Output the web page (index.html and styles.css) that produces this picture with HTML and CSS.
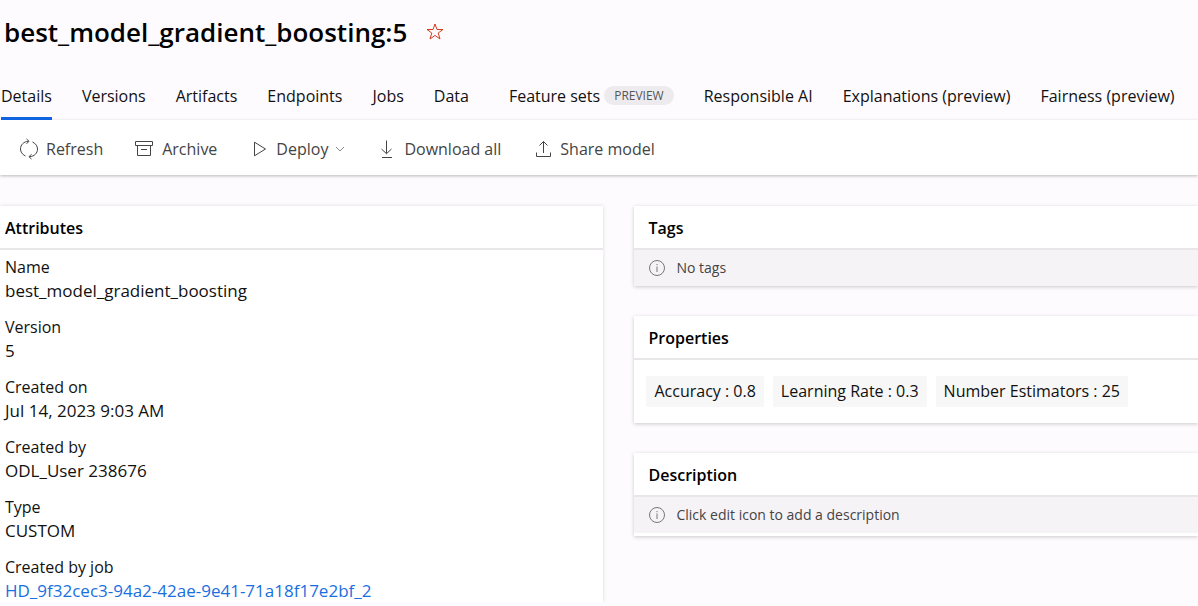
FILE: index.html
```html
<!DOCTYPE html>
<html lang="en">
<head>
<meta charset="utf-8">
<meta name="viewport" content="width=device-width, initial-scale=1">
<title>best_model_gradient_boosting:5</title>
<link rel="stylesheet" href="styles.css">
</head>
<body>
<header class="page-header">
  <h1 class="page-title">best_model_gradient_boosting:5</h1>
  <button class="favorite" type="button" aria-label="Add to favorites">
    <svg width="18" height="18" viewBox="0 0 18 18"><path d="M9 1 11 6.500H17L12.200 10 14 16 9 12.400 4 16 5.800 10 1 6.500H7Z"/></svg>
  </button>
</header>
<nav class="tabs" aria-label="Model sections">
  <a class="tab tab-active" href="#details" aria-current="page">Details</a>
  <a class="tab" href="#versions">Versions</a>
  <a class="tab" href="#artifacts">Artifacts</a>
  <a class="tab" href="#endpoints">Endpoints</a>
  <a class="tab" href="#jobs">Jobs</a>
  <a class="tab" href="#data">Data</a>
  <a class="tab tab-feature" href="#features">Feature sets <span class="badge">PREVIEW</span></a>
  <a class="tab" href="#responsible">Responsible AI</a>
  <a class="tab" href="#explanations">Explanations (preview)</a>
  <a class="tab" href="#fairness">Fairness (preview)</a>
</nav>
<div class="toolbar" role="toolbar" aria-label="Model actions">
  <button class="action" type="button">
    <svg class="icon" width="20" height="22" viewBox="0 0 20 22"><path d="M6.500 18C3 16.500 1.500 13.500 1.500 11 1.500 7 4.500 3.500 9.500 3.300M7.500 1 10 3.300 7.500 5.800M13.500 4C17 5.500 18.500 8.500 18.500 11 18.500 15 15.500 18.500 10.500 18.700M12.500 16.200 10 18.700 12.500 21"/></svg>
    Refresh
  </button>
  <button class="action" type="button">
    <svg class="icon" width="20" height="18" viewBox="0 0 20 18"><path d="M.5 1.500H17.500V5.500H.5ZM2.500 5.500V15.500H15.500V5.500M6 9.500H12"/></svg>
    Archive
  </button>
  <button class="action" type="button" aria-haspopup="true">
    <svg class="icon" width="20" height="18" viewBox="-4 0 20 18"><path d="M1.500 2.200V15.800L12.500 9Z"/></svg>
    Deploy
    <svg class="chevron" width="10" height="8" viewBox="0 0 10 8"><path d="M1 2 5 6 9 2"/></svg>
  </button>
  <button class="action" type="button">
    <svg class="icon" width="20" height="20" viewBox="-3 0 20 20"><path d="M6.500 1.500V14.500M1.500 10 6.500 14.700 11.500 10M2 18.500H12"/></svg>
    Download all
  </button>
  <button class="action" type="button">
    <svg class="icon" width="20" height="20" viewBox="-3 0 20 20"><path d="M7.500 14V2.500M3.500 6.500 7.500 2.500 11.500 6.500M.5 13.500V17.500H14.500V13.500"/></svg>
    Share model
  </button>
</div>
<main class="content">
  <section class="card attributes">
    <h2 class="card-title">Attributes</h2>
    <dl class="fields">
      <div><dt>Name</dt><dd>best_model_gradient_boosting</dd></div>
      <div><dt>Version</dt><dd>5</dd></div>
      <div><dt>Created on</dt><dd>Jul 14, 2023 9:03 AM</dd></div>
      <div><dt>Created by</dt><dd>ODL_User 238676</dd></div>
      <div><dt>Type</dt><dd>CUSTOM</dd></div>
      <div><dt>Created by job</dt><dd><a class="link" href="#job">HD_9f32cec3-94a2-42ae-9e41-71a18f17e2bf_2</a></dd></div>
    </dl>
  </section>
  <div class="side">
    <section class="card">
      <h2 class="card-title">Tags</h2>
      <p class="notice">
        <svg class="info" width="18" height="18" viewBox="0 0 18 18"><circle cx="9" cy="9" r="7.500"/><path d="M9 7.500V13M9 5V6.200"/></svg>
        No tags
      </p>
    </section>
    <section class="card">
      <h2 class="card-title">Properties</h2>
      <ul class="chips">
        <li>Accuracy : 0.8</li>
        <li>Learning Rate : 0.3</li>
        <li>Number Estimators : 25</li>
      </ul>
    </section>
    <section class="card description">
      <h2 class="card-title">Description</h2>
      <p class="notice">
        <svg class="info" width="18" height="18" viewBox="0 0 18 18"><circle cx="9" cy="9" r="7.500"/><path d="M9 7.500V13M9 5V6.200"/></svg>
        Click edit icon to add a description
      </p>
    </section>
  </div>
</main>
</body>
</html>
```

FILE: styles.css
```css
* { box-sizing: border-box; }
body {
  margin: 0;
  background: #fefbff;
  color: #111;
  font: 16px/24px "Open Sans", "Noto Sans", sans-serif;
  overflow-x: hidden;
}
h1, h2, p, dl, dd, ul { margin: 0; padding: 0; }
svg { fill: none; stroke: currentColor; flex: none; }
button { border: 0; padding: 0; background: none; font: inherit; color: inherit; cursor: pointer; }

.page-header { display: flex; align-items: center; gap: 19px; padding: 14px 4px 0; }
.page-title { font-size: 26px; line-height: 36px; font-weight: 600; color: #000; }
.favorite { display: flex; color: #d13b20; }

.tabs { display: flex; gap: 30px; padding: 24px 1px 0; white-space: nowrap; }
.tab {
  display: flex;
  align-items: center;
  height: 46px;
  border-bottom: 3px solid transparent;
  color: #111;
  font-size: 16px;
  text-decoration: none;
}
.tab-active { border-color: #0f62e0; }
.tab-feature { margin-left: 10px; gap: 4px; }
.badge {
  padding: 0 10px;
  border-radius: 10px;
  background: #eeebef;
  color: #555;
  font-size: 12px;
  line-height: 19px;
}

.toolbar {
  display: flex;
  align-items: center;
  gap: 32px;
  height: 55px;
  padding: 2px 19px 0;
  background: #fff;
  box-shadow: 0 1px 3px #0004;
  color: #444;
  white-space: nowrap;
}
.action { display: flex; align-items: center; gap: 7px; font-size: 16px; }
.chevron { color: #888; }

.content {
  display: grid;
  grid-template-columns: minmax(0, 604fr) minmax(0, 564fr);
  gap: 31px;
  align-items: start;
  padding-top: 31px;
}
.card { background: #fff; box-shadow: 0 1px 4px #0003; }
.card-title {
  padding: 10px 14px 8px;
  border-bottom: 2px solid #e8e6e9;
  font-size: 16px;
  line-height: 24px;
  font-weight: 600;
  color: #000;
}
.attributes { box-shadow: 0 0 4px #0002; }
.attributes .card-title { padding-left: 5px; }
.fields {
  display: grid;
  gap: 14px;
  padding: 6px 5px 0;
  line-height: 23px;
}
.fields dd { font-size: 17px; }
.link { color: #1a6fe0; text-decoration: none; }
.side { display: grid; gap: 30px; }
.notice {
  display: flex;
  align-items: center;
  gap: 10px;
  height: 36px;
  padding: 0 14px;
  background: #f6f3f7;
  color: #444;
  font-size: 14px;
}
.info { color: #777; }
.description { padding-bottom: 3px; }
.chips { display: flex; flex-wrap: wrap; gap: 9px; padding: 16px 12px; list-style: none; }
.chips li { padding: 3px 8px 4px; border-radius: 2px; background: #f7f7f7; font-size: 16px; }
```
